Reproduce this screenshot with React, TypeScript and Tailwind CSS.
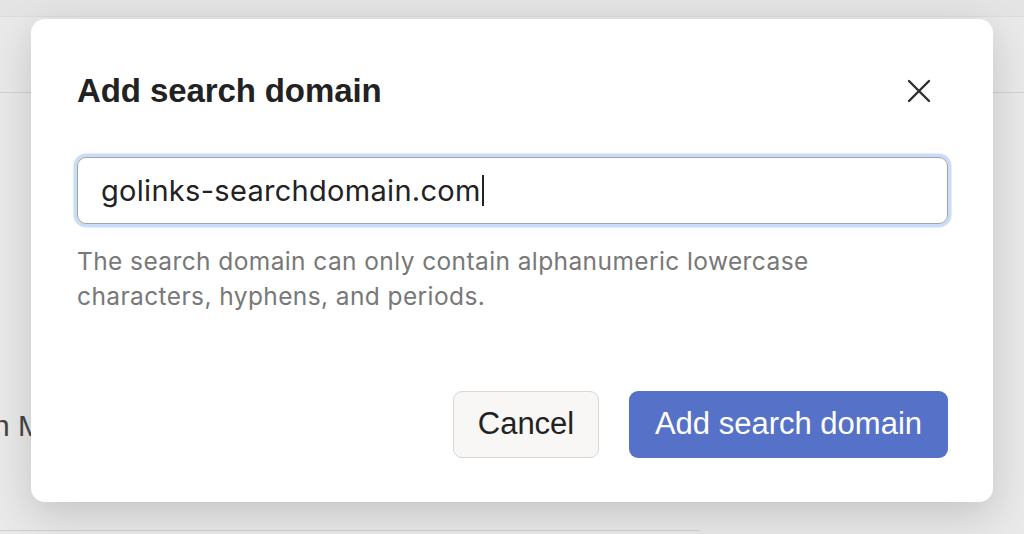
import React from "react";

export default function App() {
  return (
    <div className="relative w-[1024px] h-[534px] overflow-hidden bg-[#e9e9e9] font-['Inter',sans-serif]">
      {/* background page (dimmed) */}
      <div className="flex flex-col h-full">
        <div className="h-[17px] bg-[#e4e4e4] border-b border-[#dcdcdc]" />
        <div className="h-[76px] border-b border-[#d2d2d2]" />
        <div className="flex-1 flex flex-col justify-end">
          <div className="h-[98px] flex items-center">
            <span className="-ml-[7px] text-[30px] text-[#454545] font-['Liberation_Sans',sans-serif]">n M</span>
          </div>
          <div className="h-[56px]" />
          <div className="h-[4px] w-[700px] border-t border-[#d0d0d0]" />
        </div>
      </div>

      {/* modal */}
      <div className="absolute left-[31px] top-[19px] w-[962px] h-[483px] bg-white rounded-[14px] shadow-[0_12px_40px_rgba(0,0,0,0.16)] flex flex-col pt-[51px] pl-[46px] pr-[45px] pb-[44px]">
        <div className="flex items-center justify-between h-[42px]">
          <h2 className="text-[33px] leading-[42px] font-bold text-[#222222] tracking-[-0.1px] font-['Liberation_Sans',sans-serif]">
            Add search domain
          </h2>
          <button className="w-[44px] h-[44px] flex items-center justify-center mr-[7px]">
            <svg width="24" height="24" viewBox="0 0 24 24" fill="none" stroke="#2e2e2e" strokeWidth="2.4" strokeLinecap="round">
              <path d="M2 2L22 22M22 2L2 22" />
            </svg>
          </button>
        </div>

        <div className="mt-[45px] h-[67px] rounded-[9px] border border-[#a3a3a3] shadow-[0_0_0_3.5px_#cadcf9] flex items-center pl-[23px]">
          <span className="text-[29px] tracking-[0.3px] text-[#222222] leading-none">golinks-searchdomain.com</span>
          <span className="w-[2px] h-[31px] bg-[#222] ml-[1px]" />
        </div>

        <p className="mt-[20px] text-[24.5px] tracking-[0.4px] leading-[35px] text-[#787878] pr-[40px]">
          The search domain can only contain alphanumeric lowercase characters, hyphens, and periods.
        </p>

        <div className="mt-auto flex justify-end gap-[30px] font-['Liberation_Sans',sans-serif]">
          <button className="w-[146px] h-[67px] rounded-[9px] bg-[#f8f7f6] border border-[#dbd6d4] text-[31px] text-[#222222]">
            Cancel
          </button>
          <button className="w-[319px] h-[67px] rounded-[9px] bg-[#5672c8] text-[31px] text-white">
            Add search domain
          </button>
        </div>
      </div>
    </div>
  );
}
